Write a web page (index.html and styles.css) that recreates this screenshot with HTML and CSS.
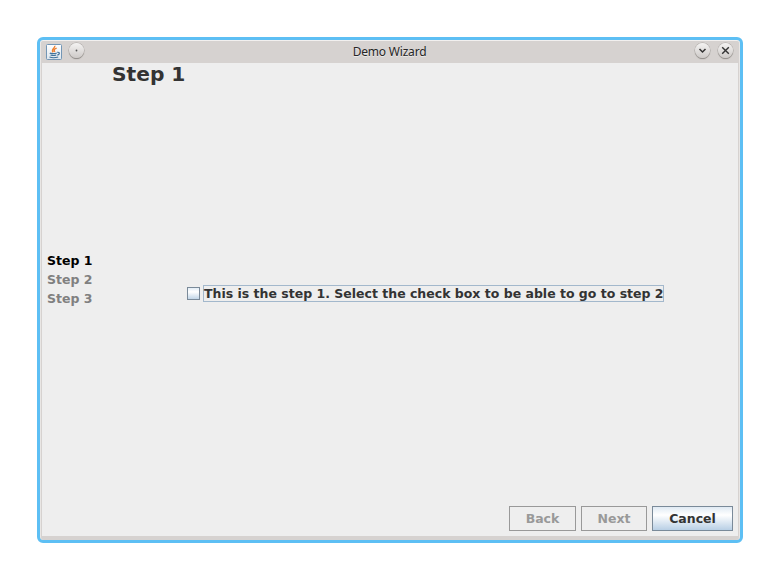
FILE: index.html
```
<!DOCTYPE html>
<html lang="en">
<head>
<meta charset="utf-8">
<title>Demo Wizard</title>
<link rel="stylesheet" href="styles.css">
</head>
<body>
<div class="window">
  <header class="titlebar">
    <div class="controls">
      <svg class="java" width="16" height="16" viewBox="0 0 16 16">
        <defs><linearGradient id="tile" x1="0" y1="0" x2="0" y2="1"><stop offset="0" stop-color="#fff"/><stop offset="1" stop-color="#dce5ed"/></linearGradient></defs>
        <rect x=".5" y=".5" width="15" height="15" rx="1" fill="url(#tile)" stroke="#7396b5"/>
        <path d="M8.8 1.800C9.400 4 4.500 5 7.200 8.300M10.700 4.200C7.800 5 7.800 6.200 8.800 8" fill="none" stroke="#ee8132" stroke-width="1.400"/>
        <path d="M3.800 9C4.500 9.800 9 9.700 10.800 9M4.500 11C6.500 11.600 9 11.500 10.200 11M11.200 8.300C14.300 7.900 13.700 10.600 11.300 11.200M3.500 13C5.500 13.800 10 13.700 12.200 13" fill="none" stroke="#40729b" stroke-width="1.200"/>
      </svg>
      <span class="round"><svg width="15" height="15" viewBox="0 0 15 15"><circle cx="7.500" cy="7.500" r=".9" fill="#555"/></svg></span>
    </div>
    <h1 class="caption">Demo Wizard</h1>
    <div class="controls controls-end">
      <span class="round"><svg width="15" height="15" viewBox="0 0 15 15"><path d="M4.500 6L7.500 9L10.500 6" fill="none" stroke="#333" stroke-width="1.500"/></svg></span>
      <span class="round"><svg width="15" height="15" viewBox="0 0 15 15"><path d="M4.200 4.200L10.800 10.800M10.800 4.200L4.200 10.800" fill="none" stroke="#333" stroke-width="1.400"/></svg></span>
    </div>
  </header>
  <main class="content">
    <h2 class="heading">Step 1</h2>
    <div class="body">
      <ol class="steps">
        <li class="current">Step 1</li>
        <li>Step 2</li>
        <li>Step 3</li>
      </ol>
      <label class="option"><span class="box"></span><span class="label">This is the step 1. Select the check box to be able to go to step 2</span></label>
    </div>
    <footer class="actions">
      <button class="back" disabled>Back</button>
      <button class="next" disabled>Next</button>
      <button class="cancel">Cancel</button>
    </footer>
  </main>
</div>
</body>
</html>
```
FILE: styles.css
```
* { box-sizing: border-box; }
body {
  margin: 0;
  padding: 37px;
  background: #fff;
  font: bold 12.5px/19px "DejaVu Sans", sans-serif;
  color: #333;
}
.window {
  width: 706px;
  height: 506px;
  border: 3px solid #5dbff4;
  border-radius: 6px;
  padding: 0 2px 4px;
  background: #d6d2d0;
  box-shadow: inset 0 1px #f2f0ef, inset 1px 0 #e9e6e4, inset -1px 0 #e9e6e4;
}
.titlebar {
  height: 23px;
  display: grid;
  grid-template-columns: 1fr auto 1fr;
  align-items: center;
  padding: 0 5px 0 4px;
}
.controls { display: flex; align-items: center; gap: 7px; }
.controls-end { justify-content: flex-end; gap: 8px; }
.java { display: block; }
.round {
  width: 15px;
  height: 15px;
  margin-bottom: 2px;
  border-radius: 50%;
  background: linear-gradient(#f4f3f2, #cecac8);
  box-shadow: 0 0 0 .5px #aaa6a3, 0 1px 1px #77736f;
}
.round svg { display: block; }
.caption {
  margin: 0;
  font: 12px/20px "Noto Sans", sans-serif;
  letter-spacing: -.2px;
  color: #262626;
  text-shadow: 0 1px #eceae9;
}
.content {
  height: 473px;
  display: flex;
  flex-direction: column;
  background: #eee;
}
.heading { margin: 0 0 2px 70px; font-size: 20.2px; line-height: 22px; }
.body { flex: 1; display: flex; align-items: flex-start; }
.steps {
  width: 145px;
  margin: 164px 0 0;
  padding: 0 0 0 5px;
  list-style: none;
  color: #808080;
}
.steps .current { color: #000; }
.option { display: flex; align-items: center; gap: 3px; margin-top: 198px; }
.box {
  width: 13px;
  height: 13px;
  border: 1px solid #7a8a99;
  background: linear-gradient(#e3edf6, #fff 35%, #c1d5e7);
}
.label {
  width: 461px;
  height: 17px;
  border: 1px solid #a3b8cc;
  line-height: 15px;
  white-space: nowrap;
}
.actions { display: flex; justify-content: flex-end; gap: 5px; padding: 0 5px 5px 0; }
.actions button {
  height: 25px;
  padding: 0;
  border: 1px solid #999;
  background: #eee;
  font: inherit;
  color: #999;
}
.actions .back { width: 67px; }
.actions .next { width: 66px; }
.actions .cancel {
  width: 81px;
  border-color: #7a8a99;
  background: linear-gradient(#e0eaf3, #fff 35%, #b8cfe5);
  color: #333;
}
```
